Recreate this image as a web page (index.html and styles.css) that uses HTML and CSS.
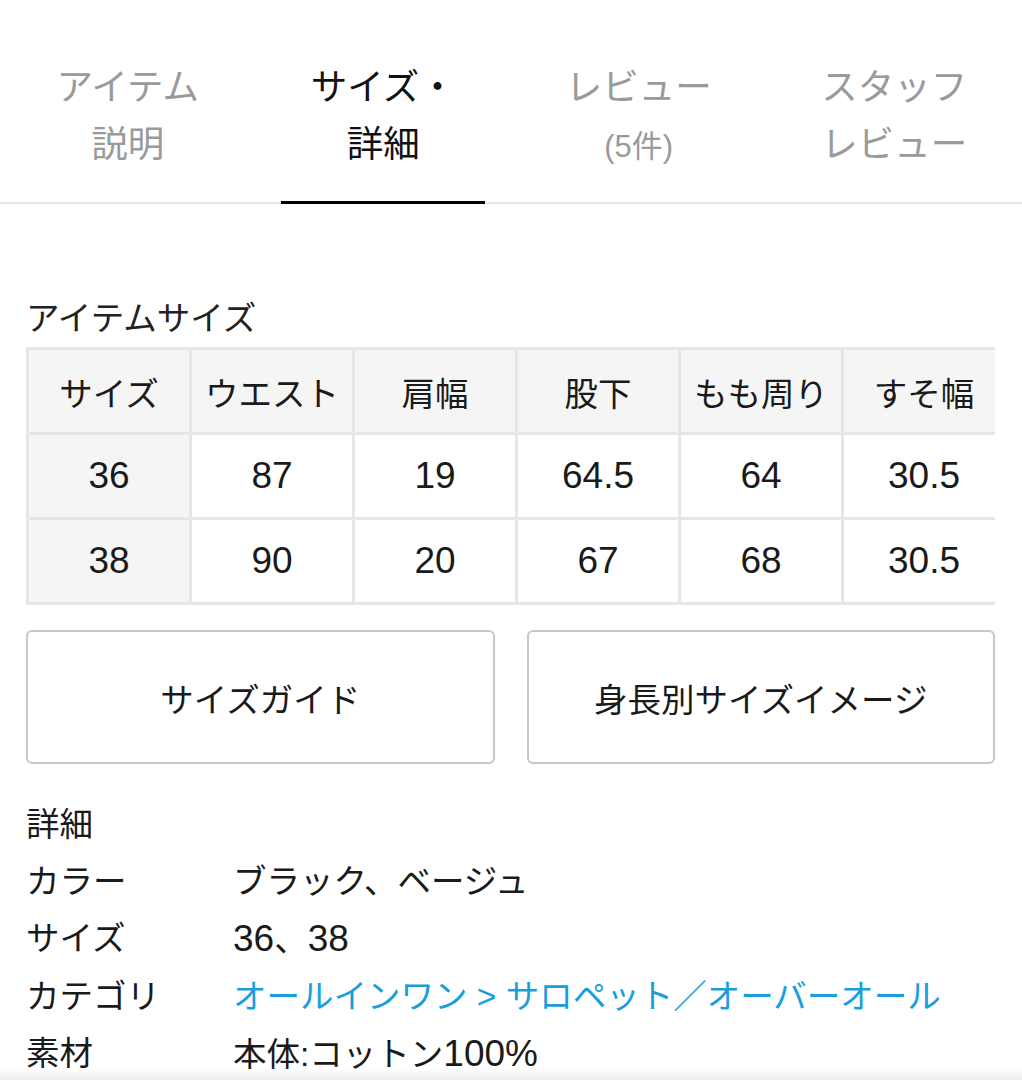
FILE: index.html
```html
<!DOCTYPE html>
<html lang="ja">
<head>
<meta charset="utf-8">
<title>サイズ・詳細</title>
<link rel="stylesheet" href="styles.css">
</head>
<body>
<nav class="tabs">
  <div class="tab">アイテム<br>説明</div>
  <div class="tab active">サイズ・<br>詳細</div>
  <div class="tab">レビュー<br><span class="small">(5件)</span></div>
  <div class="tab">スタッフ<br>レビュー</div>
</nav>

<main class="content">
  <h2 class="section-title">アイテムサイズ</h2>
  <div class="table-wrap">
    <table class="size-table">
      <thead>
        <tr><th>サイズ</th><th>ウエスト</th><th>肩幅</th><th>股下</th><th>もも周り</th><th>すそ幅</th></tr>
      </thead>
      <tbody>
        <tr><th>36</th><td>87</td><td>19</td><td>64.5</td><td>64</td><td>30.5</td></tr>
        <tr><th>38</th><td>90</td><td>20</td><td>67</td><td>68</td><td>30.5</td></tr>
      </tbody>
    </table>
  </div>

  <div class="buttons">
    <div class="btn">サイズガイド</div>
    <div class="btn">身長別サイズイメージ</div>
  </div>

  <h2 class="detail-title">詳細</h2>
  <dl class="details">
    <div class="row"><dt>カラー</dt><dd>ブラック、ベージュ</dd></div>
    <div class="row"><dt>サイズ</dt><dd><span class="num">36</span>、<span class="num">38</span></dd></div>
    <div class="row"><dt>カテゴリ</dt><dd><a class="link">オールインワン &gt; サロペット／オーバーオール</a></dd></div>
    <div class="row"><dt>素材</dt><dd>本体:コットン<span class="num">100%</span></dd></div>
  </dl>
</main>
<div class="bottom-shadow"></div>
</body>
</html>
```

FILE: styles.css
```css
html, body {
  margin: 0;
  padding: 0;
  background: #fff;
}
body {
  font-family: "Liberation Sans", "Noto Sans CJK JP", sans-serif;
  color: #1a1a1a;
  width: 1022px;
  overflow: hidden;
}

.tabs {
  display: grid;
  grid-template-columns: repeat(4, 1fr);
  border-bottom: 2px solid #e6e6e6;
  height: 202px;
}
.tab {
  position: relative;
  text-align: center;
  font-size: 36.5px;
  line-height: 57px;
  color: #9a9a9a;
  padding-top: 59px;
}
.tab .small {
  font-size: 31px;
}
.tab.active {
  color: #111;
}
.tab.active::after {
  content: "";
  position: absolute;
  left: 10%;
  right: 10%;
  bottom: -2px;
  height: 3px;
  background: #000;
}

.content {
  padding: 0 27px 0 26px;
}
.section-title {
  margin: 91px 0 4px;
  font-size: 33.5px;
  line-height: 48px;
  font-weight: normal;
  color: #222;
}
.table-wrap {
  width: 969px;
  overflow: hidden;
}
.size-table {
  border-collapse: separate;
  border-spacing: 3px;
  background: #e6e6e6;
  table-layout: fixed;
  width: 981px;
}
.size-table th,
.size-table td {
  width: 160px;
  height: 82px;
  padding: 0;
  text-align: center;
  font-size: 37px;
  font-weight: normal;
  color: #1a1a1a;
  background: #fff;
}
.size-table thead th {
  font-size: 33.5px;
}
.size-table thead th,
.size-table tbody th {
  background: #f5f5f5;
}

.buttons {
  display: grid;
  grid-template-columns: 1fr 1fr;
  gap: 32px;
  margin-top: 25px;
}
.btn {
  height: 130px;
  border: 2px solid #c8c8c8;
  border-radius: 6px;
  display: flex;
  align-items: center;
  justify-content: center;
  font-size: 33.5px;
  color: #1a1a1a;
}

.detail-title {
  margin: 32px 0 0;
  font-size: 33.5px;
  line-height: 57px;
  font-weight: normal;
}
.details {
  margin: 0;
}
.row {
  display: flex;
  font-size: 33.5px;
  line-height: 57px;
}
.row dt {
  width: 207px;
  flex: none;
}
.row dd {
  margin: 0;
}
.num {
  font-size: 37px;
}
.link {
  color: #1a9edb;
  text-decoration: none;
}

.bottom-shadow {
  position: fixed;
  left: 0;
  right: 0;
  bottom: 0;
  height: 12px;
  background: linear-gradient(to bottom, rgba(0,0,0,0), rgba(0,0,0,0.07));
}
```
